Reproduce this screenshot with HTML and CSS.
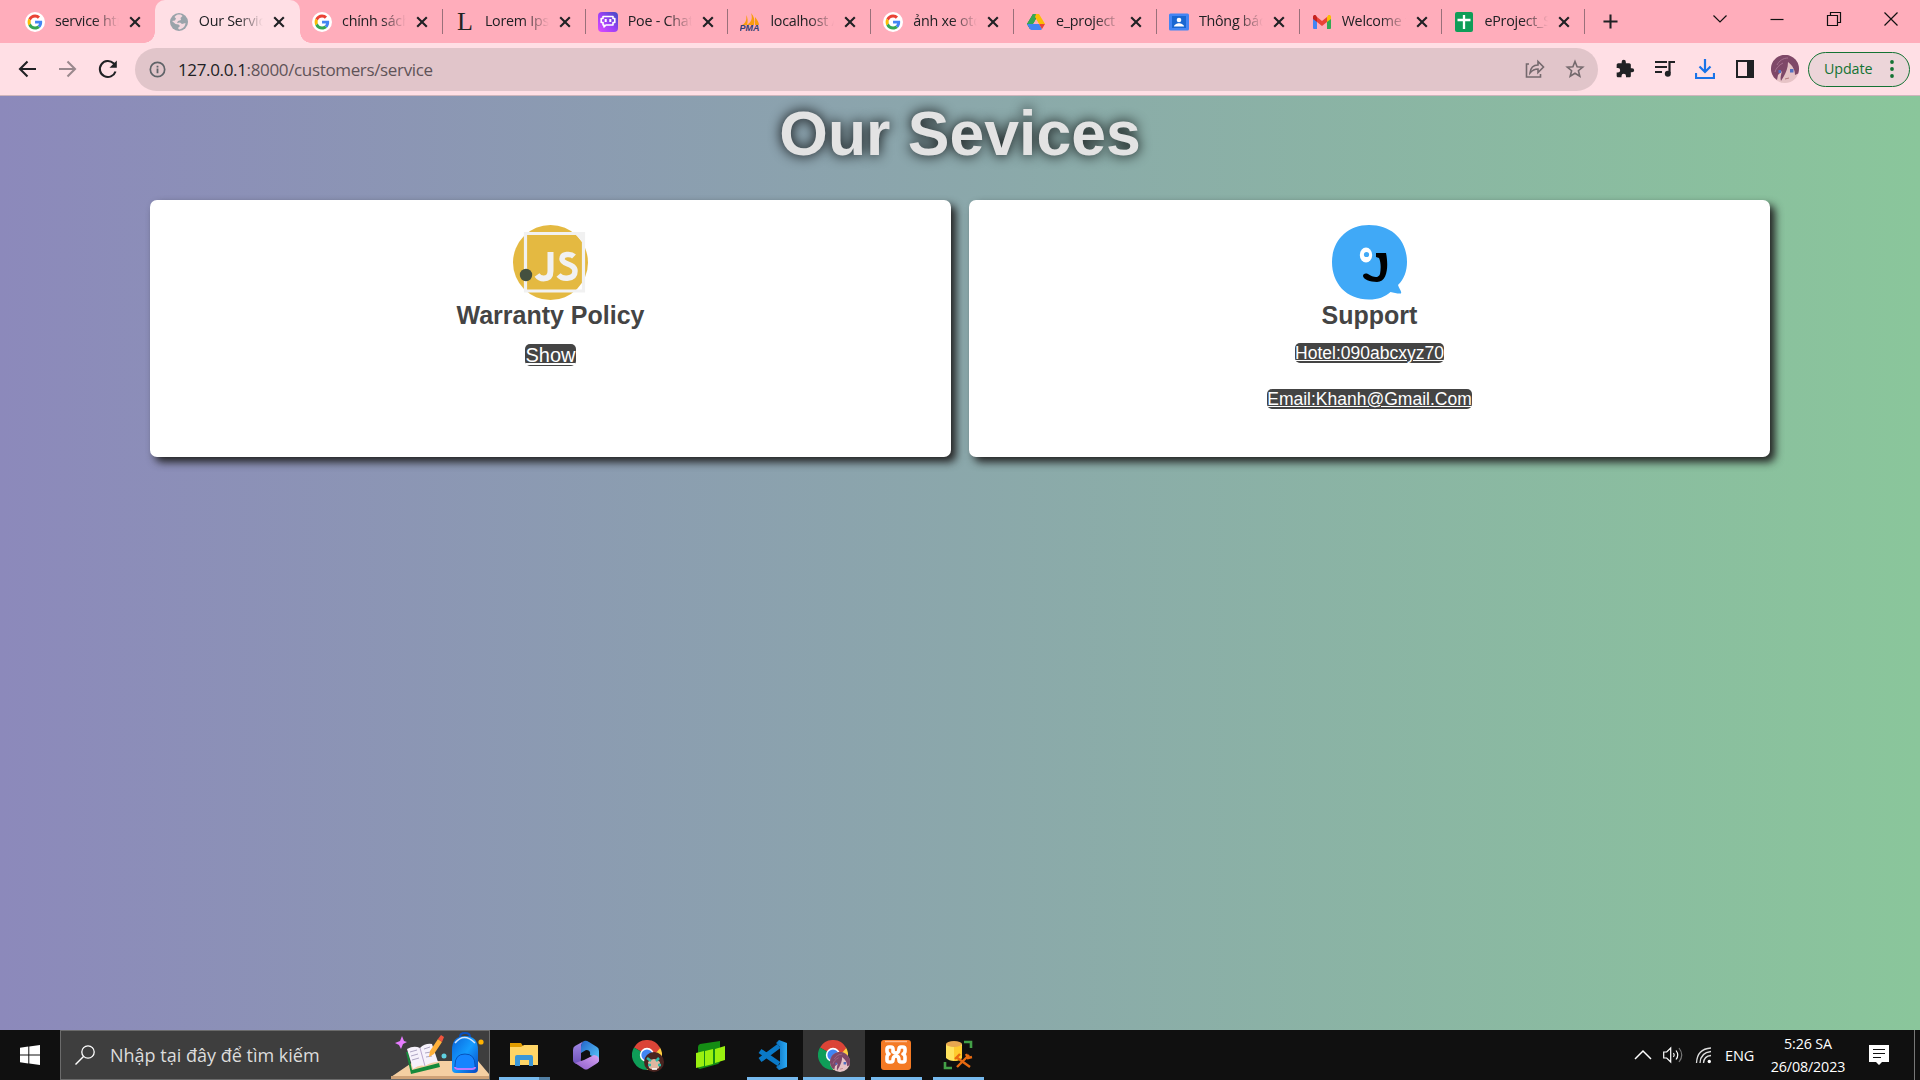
FILE: index.html
```html
<!DOCTYPE html>
<html lang="vi">
<head>
<meta charset="utf-8">
<title>Our Services</title>
<link rel="stylesheet" href="styles.css">
</head>
<body>
<svg class="defs" width="0" height="0">
  <defs>
    <linearGradient id="poe" x1="0" y1="1" x2="1" y2="0"><stop offset="0" stop-color="#e04bff"/><stop offset=".5" stop-color="#9a40f5"/><stop offset="1" stop-color="#3d4cc0"/></linearGradient>
    <linearGradient id="m1" x1="0" y1="0" x2="0" y2="1"><stop offset="0" stop-color="#a58be8"/><stop offset="1" stop-color="#6b4fb8"/></linearGradient>
    <linearGradient id="m2" x1="0" y1="0" x2="1" y2="1"><stop offset="0" stop-color="#2464c8"/><stop offset="1" stop-color="#5ccfff"/></linearGradient>
    <linearGradient id="m3" x1="0" y1="1" x2="1" y2="0"><stop offset="0" stop-color="#8a5bc8"/><stop offset="1" stop-color="#d9a4f4"/></linearGradient>
    <linearGradient id="bag" x1="0" y1="0" x2="1" y2="1"><stop offset="0" stop-color="#0a62d8"/><stop offset=".5" stop-color="#149cff"/><stop offset="1" stop-color="#0746c0"/></linearGradient>
    <linearGradient id="vs" x1="0" y1="0" x2="1" y2="0"><stop offset="0" stop-color="#0a70bd"/><stop offset="1" stop-color="#2ba9f5"/></linearGradient>
    <symbol id="google" viewBox="0 0 20 20"><circle cx="10" cy="10" r="10" fill="#fff"/><g transform="translate(2.6 2.6) scale(.31)"><path fill="#EA4335" d="M24 9.5c3.54 0 6.71 1.22 9.21 3.6l6.85-6.85C35.9 2.38 30.47 0 24 0 14.62 0 6.51 5.38 2.56 13.22l7.98 6.19C12.43 13.72 17.74 9.5 24 9.5z"/><path fill="#4285F4" d="M46.98 24.55c0-1.57-.15-3.09-.38-4.55H24v9.02h12.94c-.58 2.96-2.26 5.48-4.78 7.18l7.73 6c4.51-4.18 7.09-10.36 7.09-17.65z"/><path fill="#FBBC05" d="M10.53 28.59c-.48-1.45-.76-2.99-.76-4.59s.27-3.14.76-4.59l-7.98-6.19C.92 16.46 0 20.12 0 24s.92 7.54 2.56 10.78l7.97-6.19z"/><path fill="#34A853" d="M24 48c6.48 0 11.93-2.13 15.89-5.81l-7.73-6c-2.15 1.45-4.92 2.3-8.16 2.3-6.26 0-11.57-4.22-13.47-9.91l-7.98 6.19C6.51 42.62 14.62 48 24 48z"/></g></symbol>
    <symbol id="close" viewBox="0 0 12 12"><path d="M1.2 1.2l9.6 9.6M10.8 1.2L1.2 10.8" stroke="#202124" stroke-width="2.1"/></symbol>
    <symbol id="chrome" viewBox="0 0 30 30"><path fill="#db4437" d="M15 15L2 7.500A15 15 0 0 1 28 7.500z"/><path fill="#0f9d58" d="M15 15L15 30A15 15 0 0 1 2 7.500z"/><path fill="#ffcd40" d="M15 15L28 7.500A15 15 0 0 1 15 30z"/><path fill="#db4437" d="M15 8h13.300L22 15z"/><circle cx="15" cy="15" r="7.200" fill="#fff"/><circle cx="15" cy="15" r="5.600" fill="#4285f4"/></symbol>
    <symbol id="anime" viewBox="0 0 28 28"><circle cx="14" cy="14" r="14" fill="#e6c3c6"/><path fill="#7f4868" d="M3 22.500A14 14 0 1 1 27.200 18.500L24 20c0-5-2-9-7-13 0 6-2 10-4 14l-3 5c-1-3 0-6 1-10l-4 4-1 5z"/><path fill="none" stroke="#a5708d" d="M6 10c2-4 6-7 11-7M4 17c1-4 4-7 8-9"/><path fill="#5270c0" d="M7.500 15h2.500v3H7.500zM19 14h3.500v3.500H19z"/><path d="M14 24l4-1" stroke="#b17b7e"/></symbol>
  </defs>
</svg>

<header class="browser">
  <div class="tabstrip">
    <div class="tabs">
      <div class="tab"><svg class="fav"><use href="#google"/></svg><span class="label">service html</span><svg class="x"><use href="#close"/></svg></div>
      <div class="tab active"><svg class="fav" viewBox="0 0 20 20"><circle cx="10" cy="10" r="9" fill="#9aa3aa"/><path fill="#ffdfe5" d="M10 2.500c2 0 3 .6 3.500 1.500l-2 2 .5 2-3 1-1 2 3-.5 2 1.500 3.500-1c-.5 4-3 6-6.500 6.500l-1-1.500 2-2-1.500-1.500-3-.5L3 9l3-.5 1-2-1.500-1.500C7 3 8.500 2.500 10 2.500z" opacity=".9"/></svg><span class="label">Our Services</span><svg class="x"><use href="#close"/></svg></div>
      <div class="tab sep"><svg class="fav"><use href="#google"/></svg><span class="label">chính sách bảo</span><svg class="x"><use href="#close"/></svg></div>
      <div class="tab sep"><span class="fav lorem">L</span><span class="label">Lorem Ipsum</span><svg class="x"><use href="#close"/></svg></div>
      <div class="tab sep"><svg class="fav" viewBox="0 0 20 20"><rect width="20" height="20" rx="4" fill="url(#poe)"/><path fill="none" stroke="#fff" stroke-width="1.600" stroke-linejoin="round" d="M5 4.500h10v2h1.800v4H15v2.500H8l-2 2v-2H5v-2.500H3.200v-4H5z"/><path d="M7.700 7v3M12.300 7v3" stroke="#fff" stroke-width="2"/></svg><span class="label">Poe - Chat</span><svg class="x"><use href="#close"/></svg></div>
      <div class="tab sep"><svg class="fav" viewBox="0 0 20 20"><path fill="#f89c0e" d="M6 3c1 4 0 8-4 10h5c1-4 1-7-1-10zM11 1c2 6 0 9-4 12h7c1-5 0-9-3-12zM15 5c2 3 4 5 4 8h-4z"/><text x="-.5" y="19" class="pma">PMA</text></svg><span class="label">localhost / 127</span><svg class="x"><use href="#close"/></svg></div>
      <div class="tab sep"><svg class="fav"><use href="#google"/></svg><span class="label">ảnh xe oto đẹp</span><svg class="x"><use href="#close"/></svg></div>
      <div class="tab sep"><svg class="fav" viewBox="0 0 20 20"><path fill="#188038" d="M7 2h6L7.500 11 4 17 1 12z"/><path fill="#34a853" d="M7 2h3l-1 7-5 8-3-5z"/><path fill="#fbbc04" d="M10 2h3l6 10h-6L9 5z"/><path fill="#4285f4" d="M1 12h12l3 5q-.5 1-1.500 1h-9Q4.500 18 4 17z"/><path fill="#ea4335" d="M13 12h6l-3 5z"/><path fill="#ffadbb" d="M10 7.500l2.700 4.500H7.300z"/></svg><span class="label">e_project - G</span><svg class="x"><use href="#close"/></svg></div>
      <div class="tab sep"><svg class="fav" viewBox="0 0 20 20"><rect y="1.500" width="20" height="17" rx="1.500" fill="#4285f4"/><rect x="3" y="4" width="14" height="12" fill="#1967d2"/><circle cx="10" cy="8" r="2.300" fill="#fff"/><path fill="#fff" d="M5 14.500c0-2 3-3.300 5-3.300s5 1.300 5 3.300z"/></svg><span class="label">Thông báo mới</span><svg class="x"><use href="#close"/></svg></div>
      <div class="tab sep"><svg class="fav" viewBox="0 0 20 20"><path fill="#4285f4" d="M1 6l4 3v8H2q-1 0-1-1z"/><path fill="#34a853" d="M15 9l4-3v10q0 1-1 1h-3z"/><path fill="#ea4335" d="M5 5l5 4 5-4v5l-5 4-5-4z"/><path fill="#c5221f" d="M1 5c0-2 2-2.500 3-1.500L5 5v5L1 7z"/><path fill="#fbbc04" d="M19 5c0-2-2-2.500-3-1.500L15 5v5l4-3z"/></svg><span class="label">Welcome to</span><svg class="x"><use href="#close"/></svg></div>
      <div class="tab sep"><svg class="fav" viewBox="0 0 20 20"><rect x="1" width="18" height="20" rx="2" fill="#0f9d58"/><path d="M10 3v14M3.500 8h13" stroke="#fff" stroke-width="2.300"/></svg><span class="label">eProject_Sem</span><svg class="x"><use href="#close"/></svg></div>
    </div>
    <svg class="plus" viewBox="0 0 16 16"><path d="M8 .5v15M.5 8h15" stroke="#202124" stroke-width="2.200"/></svg>
    <div class="winctl">
      <svg viewBox="0 0 16 16"><path d="M1.500 4.500l6.500 6.500 6.500-6.500"/></svg>
      <svg viewBox="0 0 16 16"><path d="M1.500 8.500h13"/></svg>
      <svg viewBox="0 0 16 16"><path d="M1.500 4.500h10v10h-10zM4.500 4V1.500h10v10H12"/></svg>
      <svg viewBox="0 0 16 16"><path d="M1.500 1.500l13 13M14.500 1.500l-13 13"/></svg>
    </div>
  </div>
  <div class="toolbar">
    <svg class="tool" viewBox="0 0 20 20"><path d="M18 10H2M9.500 2.500L2 10l7.500 7.500" class="ln"/></svg>
    <svg class="tool dim" viewBox="0 0 20 20"><path d="M1 10h16M9.500 2.500L17 10l-7.500 7.500" class="ln"/></svg>
    <svg class="tool" viewBox="0 0 20 20"><path d="M17.500 12.500A8 8 0 1 1 15.500 4.300L17 6" class="ln"/><path d="M18.800 1.500v7.300h-7.300z" fill="#202124"/></svg>
    <div class="omnibox">
      <svg class="info" viewBox="0 0 18 18"><circle cx="9" cy="9" r="7.600" fill="none" stroke="#5f6368" stroke-width="1.800"/><path d="M9 8v5M9 5v1.900" stroke="#5f6368" stroke-width="1.900"/></svg>
      <span class="url"><b>127.0.0.1</b>:8000/customers/service</span>
      <svg class="share" viewBox="0 0 20 20"><path d="M4 5H1.500v13h14v-3" class="gr"/><path d="M5 14c.5-5 3.500-8 8-8V2.500l5.500 5.500L13 13.500V10c-4 0-6 1.500-8 4z" class="gr"/></svg>
      <svg class="star" viewBox="0 0 20 20"><path d="M10 2.500l2.100 5.200 5.600.4-4.300 3.600 1.400 5.500L10 14.200l-4.800 3 1.400-5.500-4.300-3.600 5.600-.4z" class="gr"/></svg>
    </div>
    <svg class="tool" viewBox="0 0 24 24"><path fill="#202124" d="M20.500 11H19V7c0-1.100-.9-2-2-2h-4V3.500a2.500 2.500 0 0 0-5 0V5H4c-1.100 0-2 .9-2 2v3.800h1.500a2.700 2.700 0 0 1 0 5.400H2V20c0 1.100.9 2 2 2h3.800v-1.500a2.700 2.700 0 0 1 5.400 0V22H17c1.100 0 2-.9 2-2v-4h1.500a2.500 2.500 0 0 0 0-5z"/></svg>
    <svg class="tool" viewBox="0 0 20 20"><path d="M0 3h12M0 8h12M0 13h7" stroke="#202124" stroke-width="2"/><path d="M14.500 14V3H20" fill="none" stroke="#202124" stroke-width="2.200"/><circle cx="12.800" cy="14.700" r="3" fill="#202124"/></svg>
    <svg class="tool" viewBox="0 0 20 20"><path d="M10 0v12M4.500 7.500L10 13l5.500-5.500M1 14v5h18v-5" fill="none" stroke="#1a73e8" stroke-width="2.200"/></svg>
    <svg class="tool" viewBox="0 0 20 20"><path d="M2 2h16v16H2z" fill="none" stroke="#202124" stroke-width="2"/><path d="M12 2h6v16h-6z" fill="#202124"/></svg>
    <svg class="tool avatar"><use href="#anime"/></svg>
    <div class="update"><span>Update</span><svg viewBox="0 0 4 18"><circle cx="2" cy="2" r="1.900"/><circle cx="2" cy="9" r="1.900"/><circle cx="2" cy="16" r="1.900"/></svg></div>
  </div>
</header>

<main class="page">
  <h1>Our Sevices</h1>
  <div class="cards">
    <section class="card">
      <svg class="pic" viewBox="0 0 75 75"><circle cx="37.500" cy="37.500" r="37.500" fill="#e4b941"/><path d="M12.500 8.500h58v57.500h-58z" fill="none" stroke="#f1f1f1" stroke-width="3.200"/><path d="M62 8h9v11z" fill="#f1f1f1"/><circle cx="13" cy="50" r="6.200" fill="#44503f"/><path d="M37.500 27v19q0 7.500-7 7.500-4 0-6.500-3.500" fill="none" stroke="#f1f1f1" stroke-width="6"/><path d="M61 31.500c-3-3-12-3-12 2.500 0 6 13 4 13 12 0 8.500-12 9-16.500 4" fill="none" stroke="#f1f1f1" stroke-width="5.500"/></svg>
      <h2>Warranty Policy</h2>
      <a class="show">Show</a>
    </section>
    <section class="card">
      <svg class="pic" viewBox="0 0 75 75"><path fill="#40a9f7" d="M37 0C60 0 75 15 75 37c0 9-3 17-9 23 1 4 4 6 3 8.500-3 .5-7-1-10.500-1.500C53 72 46 74.500 37 74.500 14 74.500 0 58 0 37S15 0 37 0z"/><ellipse cx="34" cy="30" rx="6.200" ry="7.500" fill="#fff"/><circle cx="34.500" cy="29.500" r="2.600" fill="#40a9f7"/><path fill="#000" d="M44 28h10c2 9 3 29-9 29-7 0-14-3-14-6 0-2 2-3 5-2 5 3 10 5 12 0 1-5 1-12-1-16l-3-1z"/></svg>
      <h2>Support</h2>
      <a class="contact">Hotel:090abcxyz70</a>
      <a class="contact">Email:Khanh@Gmail.Com</a>
    </section>
  </div>
</main>

<footer class="taskbar">
  <div class="start"><svg viewBox="0 0 20 20"><path fill="#fff" d="M0 2.700L8.300 1.600v7.900H0zM9.300 1.400L20 0v9.500H9.300zM0 10.500h8.300v7.900L0 17.300zM9.300 10.500H20V20L9.300 18.600z"/></svg></div>
  <div class="search">
    <svg class="glass" viewBox="0 0 20 20"><circle cx="13" cy="7" r="6.200" fill="none" stroke="#fff" stroke-width="1.300"/><path d="M8.500 11.500L.5 19.500" stroke="#fff" stroke-width="1.400"/></svg>
    <span>Nhập tại đây để tìm kiếm</span>
    <svg class="art" viewBox="0 0 98 48"><path fill="#f5cfa2" d="M0 46L22 31q1-1 3-1h62l11 13v5H0z"/><path fill="#cfa277" d="M0 45h98v3H0z"/><path fill="#e77cff" d="M11 5l2 5 3 1-4 2-2 5-2-4-4-2 5-2z"/><circle cx="90" cy="11" r="2.600" fill="#ffb301"/><circle cx="53" cy="25" r="2.500" fill="#5fd0e0"/><path fill="#158a3b" d="M15 21l5 22 29-7-1-4-27 7-4-18z"/><path fill="#f6f1fb" d="M16 18q7-4 13-1 5-5 12-4l6 18q-7 0-13 4-6-2-12 3z"/><path d="M29 17l5 18" stroke="#b9a6cd"/><path d="M19 21l7-2M20 25l7-2M21 29l7-2M33 18l6-2M34 22l6-1M35 26l6-1" stroke="#9b92b5" stroke-width=".8"/><path fill="#ffb13b" d="M38 26l1-6 8-12 4 3-8 12z"/><path fill="#f2553e" d="M47 8l3-4 3 2-2 5z"/><path d="M69 6q0-4 5-4t5 4" fill="none" stroke="#0a50c0" stroke-width="2"/><path fill="url(#bag)" d="M61 19q0-14 13-14t13 14v19q0 4-4 4H65q-4 0-4-4z"/><path d="M64 12q9-11 20 0" fill="none" stroke="#cfe4ff" stroke-width="1.500"/><path fill="#1585ff" stroke="#0652ba" d="M64 34q0-11 10-11t10 11v4H64z"/><path d="M64 36q0 2 3 2h14q3 0 3-2" fill="none" stroke="#bb7aff" stroke-width="2"/></svg>
  </div>
  <div class="apps">
    <div class="app run files"><svg viewBox="0 0 30 30"><path fill="#e09c00" d="M1 3h11l2 3v5H1z"/><path fill="#ffd566" d="M1 7h11l3-2h14v20H1z"/><path fill="#3b97d8" d="M6 26V17q0-2 2-2h14q2 0 2 2v9h-4v-6h-9v6z"/></svg></div>
    <div class="app"><svg viewBox="0 0 30 30"><path fill="url(#m1)" d="M13 1L4 6q-2 1-2 4v10q0 3 4 4l6 1q-3-3-2-7V8q0-5 3-7z"/><path fill="url(#m2)" d="M13 1q2-1 5 1l8 5q2 1 2 4v9q0 2-2 3 1-4-5-7l-2-1q1-5-4-5l-5 3V7q0-4 3-6z"/><path fill="url(#m3)" d="M4 23l9-3 10-5q6 1 5 6-1 2-3 3l-8 5q-2 1-4 0z"/></svg></div>
    <div class="app"><svg class="wide" viewBox="0 0 32 32"><use href="#chrome" width="30" height="30"/><circle cx="22" cy="22" r="10" fill="#4a2420"/><path fill="#dfb6a0" d="M16 22q6-6 12 0l-1 6q-5 3-10 0z"/><path d="M15 18l4 3M27 18l-3 3M16 25h3M26 25h3" stroke="#2ebaa8" stroke-width="2.500"/><path d="M20 29h5" stroke="#fff" stroke-width="1.500"/></svg></div>
    <div class="app"><svg viewBox="0 0 30 30"><path fill="#148c14" d="M3 7Q3 5 5 4L25 1v20q0 2-2 3L5 29q-2 0-2-2z"/><path fill="#9af010" d="M1 13l8-2v15l-8 2zM10 11l8-2v15l-8 2zM20 9l10-3v14l-10 3z"/></svg></div>
    <div class="app run"><svg viewBox="0 0 30 30"><path fill="none" stroke="#0a79c7" stroke-width="5" stroke-linejoin="round" d="M3 11l19 13M3 20L22 6"/><path fill="url(#vs)" d="M22 0l8 3v24l-8 3-3-3 4-3V7l-4-4z"/></svg></div>
    <div class="app run current"><svg class="wide" viewBox="0 0 32 32"><use href="#chrome" width="30" height="30"/><use href="#anime" x="12" y="12" width="20" height="20"/></svg></div>
    <div class="app run"><svg viewBox="0 0 30 30"><rect width="30" height="30" rx="3" fill="#f47a24"/><path d="M4 1.500h22" stroke="#ffb98a" stroke-width="1.500"/><path fill="none" stroke="#fff" stroke-width="3.600" stroke-linejoin="round" stroke-linecap="round" d="M12 12V9q0-2-2-2H8Q6 7 6 9v2q0 2 2 3-2 1-2 3v3q0 2 2 2h2q2 0 2-2 0-4 3-4t3 4q0 2 2 2h2q2 0 2-2v-3q0-2-2-3 2-1 2-3V9q0-2-2-2h-2q-2 0-2 2 0 4-3 4t-3-3"/></svg></div>
    <div class="app run"><svg viewBox="0 0 30 30"><path fill="#ffe35e" d="M3 4h16v14q-3 3-8 3t-8-3z"/><path fill="#ffcb2e" d="M11 6h8v12q-3 3-8 3z"/><ellipse cx="11" cy="4" rx="8" ry="3" fill="#e8a850"/><path d="M21 2h7v6M2 22v6h7" fill="none" stroke="#43a047" stroke-width="2.600"/><path d="M13 17l14 10M26 15L14 27M12 19l5-5M23 14l2 4 4-1" fill="none" stroke="#e86a10" stroke-width="2.400"/></svg></div>
  </div>
  <div class="tray">
    <svg class="chev" viewBox="0 0 18 20"><path d="M1 14l8-8 8 8" stroke="#fff" stroke-width="1.500" fill="none"/></svg>
    <svg class="vol" viewBox="0 0 20 20"><path d="M.7 7v6h3l4 4V3l-4 4z" fill="none" stroke="#fff" stroke-width="1.200"/><path d="M10.500 8q1.500 2 0 4M13 5.500q3.500 4.500 0 9" fill="none" stroke="#fff" stroke-width="1.200"/><path d="M16 3q5.500 7 0 14" fill="none" stroke="#777" stroke-width="1.200"/></svg>
    <svg class="wifi" viewBox="0 0 20 20"><g fill="none" stroke="#ddd" stroke-width="1.300"><path d="M2.500 18Q3 4 17 3"/><path d="M6 18Q6.500 7.500 17 6.500"/><path d="M9.500 18Q10 11 17 10.500"/></g><circle cx="15.300" cy="16.500" r="1.700" fill="#fff"/></svg>
    <span class="lang">ENG</span>
    <div class="clock"><span>5:26 SA</span><span class="date">26/08/2023</span></div>
    <svg class="note" viewBox="0 0 20 20"><path fill="#fff" d="M0 0h20v17h-7l-3 3-3-3H0z"/><path d="M4 4.500h12M4 8.500h12M4 12.500h8" stroke="#111" stroke-width="1.200"/></svg>
    <i class="desk"></i>
  </div>
</footer>
</body>
</html>
```
FILE: styles.css
```css
* { box-sizing: border-box; }
body { margin: 0; width: 1920px; height: 1080px; overflow: hidden; display: flex; flex-direction: column; font-family: "Open Sans", "Noto Sans", sans-serif; }
svg { display: block; flex: none; }
.defs { position: absolute; }

.browser { flex: none; height: 96px; background: #ffdfe5; border-bottom: 1px solid #cfb5bc; }
.tabstrip { height: 43px; background: #ffadbb; display: flex; align-items: center; }
.tabs { display: flex; margin-left: 13px; height: 43px; flex: none; }
.tab { width: 142.8px; height: 43px; display: flex; align-items: center; padding-left: 12px; position: relative; flex: none; }
.tab.sep::after { content: ""; position: absolute; right: 0; top: 9px; width: 1px; height: 25px; background: #99707a; }
.tab.active { width: 145.3px; margin-left: -1px; padding-left: 14px; background: #ffdfe5; border-radius: 10px 10px 0 0; }
.tab.active::before, .tab.active::after { content: ""; position: absolute; bottom: 0; width: 11px; height: 11px; }
.tab.active::before { left: -11px; background: radial-gradient(circle at 0 0, #ffadbb 10.5px, #ffdfe5 11px); }
.tab.active::after { right: -11px; background: radial-gradient(circle at 100% 0, #ffadbb 10.5px, #ffdfe5 11px); }
.fav { width: 20px; height: 20px; flex: none; }
.lorem { font: 26px/20px "Liberation Serif", serif; color: #222; padding-left: 2px; }
.pma { font: italic bold 9px "Liberation Sans", sans-serif; fill: #33406f; }
.label { margin-left: 10px; width: 64px; overflow: hidden; white-space: nowrap; font-size: 14.3px; line-height: 22px; letter-spacing: -.25px; color: #202124; -webkit-mask-image: linear-gradient(to right, #000 60%, transparent); mask-image: linear-gradient(to right, #000 60%, transparent); position: relative; top: -1px; }
.x { width: 12px; height: 12px; margin-left: 10px; }
.plus { width: 15px; height: 15px; margin-left: 18px; }
.winctl { align-self: flex-start; margin-left: auto; margin-right: 21px; display: flex; gap: 41px; height: 37px; align-items: center; }
.winctl svg { width: 16px; height: 16px; fill: none; stroke: #111; stroke-width: 1.2; }

.toolbar { height: 52px; display: flex; align-items: center; padding-left: 8px; }
.tool { width: 20px; height: 20px; margin: 0 10px; }
.ln { fill: none; stroke: #202124; stroke-width: 2.1; }
.dim { opacity: .45; }
.omnibox { width: 1463px; height: 43px; margin: 0 7px; border-radius: 22px; background: #e1c5ca; display: flex; align-items: center; padding: 0 13px 0 14px; }
.info { width: 17px; height: 17px; }
.url { margin-left: 12px; padding-top: 1px; flex: 1; font-size: 17px; letter-spacing: -.35px; color: #5f5358; line-height: 24px; }
.url b { font-weight: 400; color: #202124; }
.share, .star { width: 20px; height: 20px; }
.star { margin-left: 20px; }
.gr { fill: none; stroke: #74696d; stroke-width: 1.6; }
.avatar { width: 28px; height: 28px; margin: 0 9px 0 6px; }
.update { width: 102px; height: 35px; border: 1.5px solid #137333; border-radius: 18px; background: #ecd5d9; display: flex; align-items: center; padding: 0 15px; justify-content: space-between; color: #137333; font-size: 14.3px; letter-spacing: -.1px; }
.update span { margin-top: -2px; }
.update svg { width: 4px; height: 18px; fill: #137333; }

.page { flex: 1; background: linear-gradient(90deg, #8c89bb, #8ac69b); font-family: "Liberation Sans", Arial, sans-serif; color: #444; }
h1 { margin: 0; height: 104px; text-align: center; font-size: 62.5px; line-height: 74px; color: #e3e3e3; text-shadow: 0 0 12.5px #000; }
.cards { display: grid; grid-template-columns: 1fr 1fr; gap: 18px; padding: 0 150px; }
.card { height: 257px; background: #fff; border-radius: 7px; box-shadow: 5px 5px 9px #222; padding-top: 25px; display: flex; flex-direction: column; align-items: center; }
.pic { width: 75px; height: 75px; }
h2 { margin: 0; font-size: 25px; line-height: 30px; }
.card a { color: #fff; background: #444; border-radius: 5px; text-decoration: underline; }
.show { font-size: 20px; line-height: 22px; margin-top: 14px; }
.contact { font-size: 17.5px; line-height: 20px; margin-top: 13px; }
.contact + .contact { margin-top: 26px; }

.taskbar { flex: none; height: 50px; background: #101010; display: flex; color: #fff; }
.start { width: 60px; display: grid; place-items: center; }
.start svg { width: 20px; height: 20px; }
.search { width: 430px; background: #3e3e3e; border: 1px solid #6b6b6b; display: flex; align-items: center; padding-left: 14px; }
.glass { width: 20px; height: 20px; }
.search span { margin-left: 15px; flex: 1; font-size: 18px; letter-spacing: 0; color: #dcdcdc; white-space: nowrap; }
.art { width: 98px; height: 48px; }
.apps { display: flex; margin-left: 3px; }
.app { width: 62px; height: 50px; display: flex; justify-content: center; padding-top: 10px; position: relative; }
.app svg { width: 30px; height: 30px; }
.app svg.wide { width: 32px; height: 32px; }
.app.run::after { content: ""; position: absolute; left: 6px; bottom: 0; width: 51px; height: 3px; background: #76b9ed; }
.app.files::after { background: linear-gradient(90deg, #76b9ed 40px, #527fa3 40px); }
.app.current { background: #343434; }
.app.current::after { left: 0; width: 62px; }
.tray { margin-left: auto; display: flex; align-items: center; }
.chev { width: 18px; height: 20px; margin-right: 11px; }
.vol { width: 20px; height: 20px; margin-right: 11px; }
.wifi { width: 20px; height: 20px; margin-right: 11px; }
.lang { width: 30px; font-size: 14.5px; letter-spacing: -.1px; }
.clock { width: 78px; margin-left: 14px; display: flex; flex-direction: column; align-items: center; font-size: 14.3px; line-height: 23px; letter-spacing: -.15px; white-space: nowrap; }
.note { width: 20px; height: 20px; margin: 0 25px 0 22px; }
.desk { width: 6px; height: 50px; border-left: 1px solid #777; }
```
